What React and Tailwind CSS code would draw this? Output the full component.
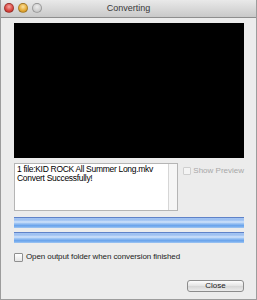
import React from 'react';

const Light = ({ className }) => (
  <span className={`block h-[10px] w-[10px] rounded-full border border-black/25 ${className}`} />
);

const ProgressBar = () => (
  <div className="h-[11px] w-full border-t border-[#5f82c8] bg-[linear-gradient(to_bottom,#a4c4f2_0%,#9bbff1_20%,#d2e4fb_40%,#9ec4f3_55%,#6ca5ec_75%,#7fb2ef_90%,#a9cbf3_100%)]" />
);

const App = () => {
  return (
    <div className="flex h-[300px] w-[257px] flex-col bg-white font-['Liberation_Sans',Arial,sans-serif]">
      <div className="flex h-[300px] flex-col border-x border-b border-[#9c9c9c] bg-[#ececec]">
        {/* Title bar */}
        <div className="relative flex h-[18px] shrink-0 items-center justify-center border-b border-[#8e8e8e] bg-[linear-gradient(to_bottom,#e9e9e9,#c9c9c9)]">
          <div className="absolute left-[3px] top-[3px] flex gap-[4px]">
            <Light className="bg-[radial-gradient(circle_at_50%_35%,#f6a3a0,#d8453e_60%,#a92a25)]" />
            <Light className="bg-[radial-gradient(circle_at_50%_35%,#fbe2a0,#e3a834_60%,#b67d1c)]" />
            <Light className="bg-[radial-gradient(circle_at_50%_35%,#ececec,#cfcfcf_60%,#b5b5b5)]" />
          </div>
          <span className="text-[9px] text-[#3a3a3a]">Converting</span>
        </div>

        <div className="flex flex-1 flex-col pl-[13px] pr-[12px]">
          {/* Video preview */}
          <div className="mt-[5px] h-[135px] w-full bg-black" />

          {/* Log + preview toggle */}
          <div className="mt-[5px] flex">
            <div className="flex h-[48px] w-[168px] border border-[#b5b5b5] bg-white">
              <div className="flex-1 px-[2px] pt-[1px] text-[8.5px] leading-[9px] tracking-[-0.3px] text-black">
                <div>1 file:KID ROCK All Summer Long.mkv</div>
                <div>Convert Successfully!</div>
              </div>
              <div className="w-[9px] border-l border-[#d6d6d6] bg-[#f6f6f6]" />
            </div>
            <label className="ml-[5px] mt-[4px] flex items-start gap-[2px] whitespace-nowrap text-[8px] leading-[8px] text-[#a8a8a8]">
              <span className="block h-[8px] w-[8px] rounded-[1px] border border-[#cfcfcf] bg-[#f4f4f4]" />
              Show Preview
            </label>
          </div>

          {/* Progress */}
          <div className="mt-[6px] flex flex-col gap-[4px]">
            <ProgressBar />
            <ProgressBar />
          </div>

          {/* Open folder option */}
          <label className="mt-[8px] flex items-center gap-[3px] text-[8px] tracking-[-0.1px] text-[#222]">
            <span className="block h-[9px] w-[9px] rounded-[1px] border border-[#8f8f8f] bg-[linear-gradient(to_bottom,#ffffff,#e6e6e6)]" />
            Open output folder when conversion finished
          </label>

          {/* Footer */}
          <div className="mt-auto mb-[7px] flex justify-end">
            <button className="flex h-[12px] w-[57px] items-center justify-center rounded-[3px] border border-[#8c8c8c] bg-[linear-gradient(to_bottom,#fdfdfd,#e3e3e3_50%,#d6d6d6_51%,#ececec)] text-[8px] leading-[8px] text-[#222]">
              Close
            </button>
          </div>
        </div>
      </div>
    </div>
  );
};

export default App;
